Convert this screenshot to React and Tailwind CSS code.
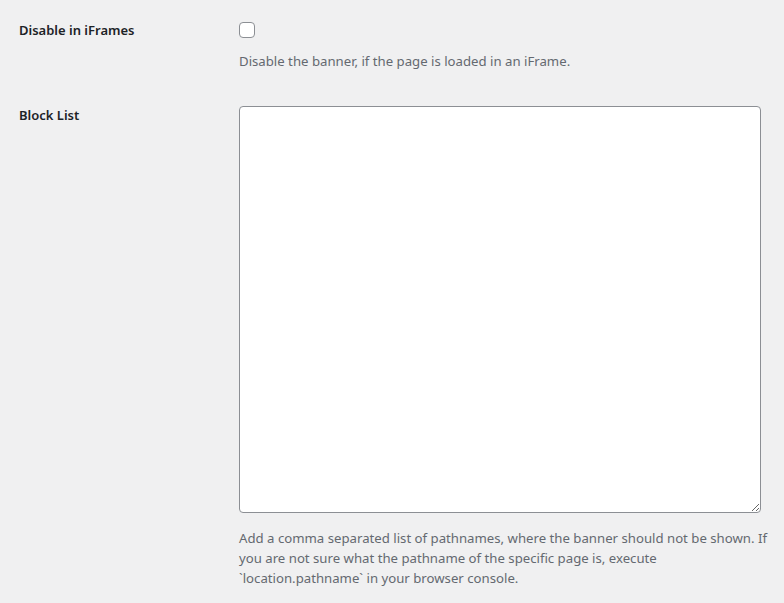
export default function App() {
  return (
    <div className="min-h-screen bg-[#f0f0f1] pl-[19px] pt-[21px] font-['Noto_Sans',sans-serif] text-[#1d2327]">
      {/* Disable in iFrames */}
      <div className="flex">
        <div className="w-[220px] shrink-0 text-[13px] font-semibold leading-[18px]">Disable in iFrames</div>
        <div>
          <input
            type="checkbox"
            className="mt-[1px] block h-4 w-4 appearance-none rounded-[4px] border border-[#8c8f94] bg-white"
          />
          <p className="mt-[13px] text-[13.2px] leading-[20px] text-[#646970]">
            Disable the banner, if the page is loaded in an iFrame.
          </p>
        </div>
      </div>

      {/* Block List */}
      <div className="mt-[35px] flex">
        <div className="w-[220px] shrink-0 text-[13px] font-semibold leading-[18px]">Block List</div>
        <div>
          <textarea className="block h-[407px] w-[522px] rounded-[4px] border border-[#8c8f94] bg-white" />
          <p className="mt-[15px] w-[530px] text-[13.2px] leading-[20px] text-[#646970]">
            Add a comma separated list of pathnames, where the banner should not be shown. If you are not sure what
            the pathname of the specific page is, execute `location.pathname` in your browser console.
          </p>
        </div>
      </div>
    </div>
  );
}
